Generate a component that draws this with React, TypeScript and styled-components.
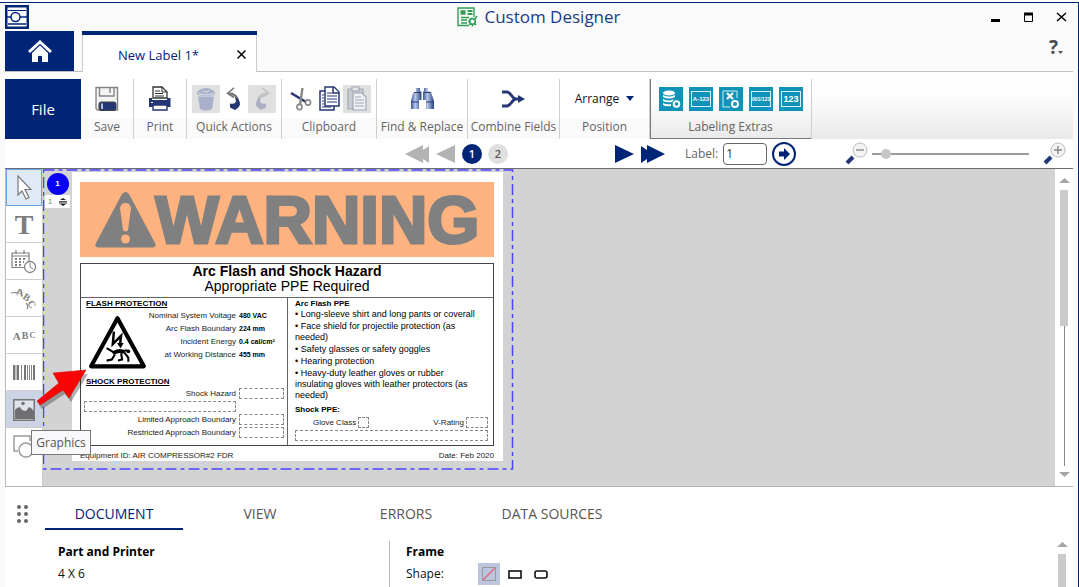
import React from 'react';
import styled, { createGlobalStyle } from 'styled-components';

const NAVY = '#002577';
const INK = '#243673';
const TEAL = '#0f93b8';

const Global = createGlobalStyle`
  * { box-sizing: border-box; }
  body { margin: 0; background: #fff; overflow: hidden; font-family: "Open Sans", "Noto Sans", sans-serif; font-size: 12px; color: #222; }
  button, input { font-family: inherit; }
  button { border: 0; padding: 0; background: none; color: inherit; }
  p, h1, h2, h3, ul { margin: 0; padding: 0; }
  svg { display: block; flex: none; }
`;

/* ---------- window ---------- */
const Shell = styled.div`
  display: flex; flex-direction: column; min-height: 100vh;
  margin-top: 2px; padding: 0 5px; background: #fafafa;
  border-top: 1px solid ${NAVY}; border-right: 1px solid ${NAVY};
`;
const TitleBar = styled.header`
  display: grid; grid-template-columns: 1fr auto 1fr; align-items: center; height: 28px;
`;
const Title = styled.h1`
  display: flex; align-items: center; gap: 6px; height: 28px;
  color: #1b3a86; font-size: 17px; line-height: 28px; font-weight: 400;
`;
const WindowButtons = styled.div`
  display: flex; justify-content: flex-end; gap: 20px; padding-right: 5px;
`;
const IconButton = styled.button`
  display: flex; align-items: center; justify-content: center;
`;
const TabRow = styled.nav`
  display: flex; height: 41px; border-bottom: 1px solid #bfbfbf;
`;
const HomeButton = styled.button`
  display: flex; align-items: center; justify-content: center;
  width: 69px; height: 40px; margin-right: 8px; background: ${NAVY};
`;
const DocTab = styled.div`
  display: flex; align-items: center; justify-content: flex-end; gap: 37px;
  width: 175px; height: 41px; padding: 2px 10px 0 0; background: #fff;
  border: solid ${NAVY}; border-width: 4px 0 0; box-shadow: inset 1px 0 #ccc, inset -1px 0 #ccc;
  color: ${NAVY}; font-size: 13px;
`;
const HelpButton = styled.button`
  display: flex; align-items: center; margin: 0 10px 8px auto;
  color: #4a4a52; font-size: 19px; line-height: 24px; font-weight: 700;
`;

/* ---------- ribbon ---------- */
const Ribbon = styled.div`
  display: flex; height: 67px; padding-top: 7px; background: linear-gradient(#fff, #fdfdfd 35%, #e9e9e9);
`;
const FileButton = styled.button`
  width: 76px; background: ${NAVY}; color: #fff; font-size: 15px;
  box-shadow: 0 -7px #fff;
`;
const Group = styled.section<{ $w: number; $dark?: boolean }>`
  display: flex; flex-direction: column; align-items: center; width: ${p => p.$w}px;
  border-right: 1px solid #cfcfcf; box-shadow: 0 -7px #fff;
  background: ${p => p.$dark ? 'linear-gradient(#fff, #fdfdfd 35%, #e9e9e9)' : 'linear-gradient(#fff 65%, #fafafa 65%)'};
  ${p => p.$dark && 'box-shadow: inset 1px 0 #77777c, inset 0 -1px #77777c;'}
`;
const GroupBody = styled.div<{ $gap?: number }>`
  display: flex; align-items: center; justify-content: center; gap: ${p => p.$gap ?? 0}px; height: 39px;
`;
const GroupLabel = styled.h2`
  color: #646464; font-size: 12px; line-height: 18px; font-weight: 400; white-space: nowrap;
`;
const ToolButton = styled.button<{ $off?: boolean }>`
  display: flex; align-items: center; justify-content: center; width: 28px; height: 28px;
  background: ${p => p.$off ? '#e0e0e0' : 'transparent'};
`;
const ArrangeButton = styled.button`
  display: flex; align-items: center; gap: 7px; color: #111; font-size: 12px;
`;
const ExtraButton = styled.button`
  display: flex; align-items: center; justify-content: center; width: 24px; height: 24px; background: ${TEAL};
`;

/* ---------- navigation ---------- */
const NavBar = styled.div`
  display: flex; align-items: center; height: 30px; padding: 0 7px 0 400px;
  background: #fff; border-bottom: 1px solid #6c6c70;
`;
const Pager = styled.div`
  display: flex; align-items: center; gap: 6px;
`;
const PageDot = styled.button<{ $on?: boolean }>`
  width: 20px; height: 20px; border-radius: 50%; font-size: 11px; font-weight: 600; line-height: 20px;
  background: ${p => p.$on ? NAVY : '#dfdfdf'}; color: ${p => p.$on ? '#fff' : '#555'};
`;
const Forward = styled(Pager)` margin-left: 106px; `;
const LabelJump = styled.label`
  display: flex; align-items: center; gap: 5px; margin-left: 20px; color: #666; font-size: 12px;
`;
const LabelInput = styled.input`
  width: 44px; height: 22px; padding: 0 2px; border: 1px solid #666; border-radius: 4px;
  font-size: 12px; color: #333; background: #fff;
`;
const GoButton = styled(IconButton)` margin-left: 5px; `;
const Zoomer = styled.div`
  display: flex; align-items: center; gap: 4px; margin-left: auto;
`;
const ZoomRange = styled.input`
  appearance: none; width: 157px; height: 12px; margin: 0 10px 0 0; background: transparent;
  &::-webkit-slider-runnable-track { height: 2px; background: #9a9a9a; }
  &::-webkit-slider-thumb { appearance: none; width: 10px; height: 10px; margin-top: -4px; border-radius: 50%; background: #c6c6c6; }
`;

/* ---------- work area ---------- */
const WorkArea = styled.main`
  position: relative; display: flex; border-bottom: 1px solid #b5b5b5;
`;
const ToolRail = styled.div`
  display: flex; flex-direction: column; width: 38px; padding: 0 0 21px;
  background: #fff; border-left: 1px solid #bbb; border-right: 1px solid #ccc;
`;
const RailTool = styled.button<{ $state?: 'active' | 'hover' }>`
  display: flex; align-items: center; justify-content: center; gap: 1px; height: 37px;
  border: 1px solid ${p => p.$state === 'active' ? '#66a7e8' : 'transparent'};
  border-bottom-color: ${p => p.$state === 'active' ? '#66a7e8' : '#ccc'};
  background: ${p => p.$state === 'active' ? '#dfeaf6' : p.$state === 'hover' ? '#ccd3e4' : '#fff'};
  color: #7c7c7c;
  &:last-child { border-bottom-color: transparent; }
`;
const Glyph = styled.span<{ $size: number }>`
  font-family: "Liberation Serif", serif; font-weight: 700; font-size: ${p => p.$size}px; line-height: 30px;
`;
const Canvas = styled.div`
  flex: 1; background: #d3d3d3;
`;
const Sheet = styled.div`
  position: relative; display: flex; width: 471px; padding: 3px 0 10px;
`;
const Boundary = styled.svg`
  position: absolute; left: 0; top: 0; width: 100%; height: 100%;
`;
const Gutter = styled.div`
  display: flex; flex-direction: column; align-items: center; width: 29px; padding-top: 1px;
`;
const SheetNumber = styled.div`
  width: 22px; height: 22px; border-radius: 50%; background: #0a00f5; color: #fff;
  font: 700 8px/22px "Liberation Sans", sans-serif; text-align: center;
`;
const CopyCount = styled.div`
  display: flex; align-items: center; justify-content: space-between; width: 25px; height: 13px; padding: 0 3px;
  background: #fff; color: #3a8a5a; font: 7px/13px "Liberation Sans", sans-serif;
`;
const LabelPaper = styled.article`
  width: 431px; height: 289px; padding: 10px 9px 0 8px; background: #fff; color: #222;
  font-family: "Liberation Sans", Arial, sans-serif; font-size: 8px; line-height: 13px;
`;
const Banner = styled.div`
  display: flex; align-items: center; justify-content: center;
  height: 75px; background: #fdb27f; color: #808080;
`;
const BannerWord = styled.span`
  font-size: 67px; line-height: 75px; font-weight: 700; -webkit-text-stroke: 3px #808080;
`;
const Hazard = styled.section`
  margin-top: 6px; border: 1px solid #444;
`;
const HazardHead = styled.header`
  height: 34px; border-bottom: 1px solid #666; text-align: center; color: #000; font-size: 14px; line-height: 15px;
`;
const HazardBody = styled.div`
  display: grid; grid-template-columns: 207px 1fr; height: 147px;
`;
const Side = styled.div<{ $left?: boolean }>`
  padding: ${p => p.$left ? '0 3px 0 3px' : '0 5px 0 7px'};
  ${p => p.$left && 'border-right: 1px solid #666;'}
`;
const Caption = styled.h3<{ $rule?: boolean }>`
  padding-left: ${p => p.$rule ? 2 : 0}px; color: #000; font-size: 8px; line-height: ${p => p.$rule ? 11 : 12}px; font-weight: 700;
  text-decoration: ${p => p.$rule ? 'underline' : 'none'};
`;
const FlashRow = styled.div`
  display: flex; justify-content: space-between; align-items: flex-start; height: 67px; padding-left: 4px;
`;
const Facts = styled.table`
  border-collapse: collapse;
  th { padding: 0 3px 0 0; font-weight: 400; text-align: right; white-space: nowrap; }
  td { width: 45px; padding: 0; font-size: 7px; font-weight: 700; color: #000; white-space: nowrap; }
  tr { height: 13px; }
`;
const FieldLine = styled.div<{ $side?: 'start' | 'spread' }>`
  display: flex; align-items: center; height: 13px; gap: 3px;
  justify-content: ${p => p.$side === 'spread' ? 'space-between' : p.$side === 'start' ? 'flex-start' : 'flex-end'};
`;
const Pair = styled.span<{ $indent?: number }>`
  display: flex; align-items: center; gap: 2px; padding-left: ${p => p.$indent ?? 0}px;
`;
const Field = styled.span<{ $w?: number }>`
  width: ${p => p.$w ? `${p.$w}px` : '100%'}; height: 11px; border: 1px dashed #888;
`;
const Bullets = styled.ul`
  list-style: none; width: 184px; margin-bottom: 2px; color: #000; font-size: 9px; line-height: 11px;
  li { padding-bottom: 1px; white-space: normal; }
  li:first-child { width: 190px; margin-top: -1px; }
`;
const PaperFoot = styled.footer`
  display: flex; justify-content: space-between; height: 14px; padding-top: 3px;
`;
const ToolTip = styled.div`
  position: absolute; left: 26px; top: 261px; width: 60px; height: 25px; text-align: center;
  background: #f8f8fa; border: 1px solid #777; color: #555; font-size: 12px; line-height: 23px;
`;
const Pointer = styled.svg`
  position: absolute; left: 25px; top: 195px; pointer-events: none;
`;
const ScrollTrack = styled.div`
  display: flex; flex-direction: column; align-items: center; width: 18px; padding: 9px 0; background: #fff;
`;
const ScrollThumb = styled.div<{ $h?: number }>`
  width: 8px; margin-top: 7px; background: #cacaca;
  ${p => p.$h ? `height: ${p.$h}px;` : 'flex: 1;'}
`;
const ScrollLine = styled.div` flex: 1; width: 1px; margin-bottom: 6px; background: #888; `;

/* ---------- bottom panel ---------- */
const Panel = styled.section`
  flex: 1; display: flex; background: #fff; min-height: 100px;
`;
const PanelMain = styled.div` flex: 1; `;
const PanelTabs = styled.div`
  display: flex; align-items: center; gap: 8px; height: 54px; padding-left: 11px;
`;
const PanelTab = styled.button<{ $on?: boolean }>`
  width: 138px; height: 31px; font-size: 14px;
  border-bottom: 2px solid ${p => p.$on ? NAVY : 'transparent'}; color: ${p => p.$on ? NAVY : '#555'};
`;
const Columns = styled.div` display: flex; height: 46px; `;
const Column = styled.div<{ $w?: number }>`
  width: ${p => p.$w ? `${p.$w}px` : 'auto'}; color: #111; font-size: 12px; line-height: 22px;
  ${p => p.$w ? 'padding-left: 53px; border-right: 1px solid #bbb;' : 'padding-left: 16px;'}
`;
const ColumnTitle = styled.h2` font-size: 12px; line-height: 22px; font-weight: 700; color: #000; `;
const ShapeRow = styled.div` display: flex; align-items: center; height: 22px; gap: 4px; `;
const ShapeName = styled.span` width: 68px; `;
const ShapeButton = styled.button<{ $on?: boolean }>`
  display: flex; align-items: center; justify-content: center; width: 22px; height: 22px;
  background: ${p => p.$on ? '#bcc4de' : 'transparent'};
`;
const PanelScroll = styled.div`
  display: flex; flex-direction: column; align-items: center; width: 22px; padding-top: 55px;
`;

/* ---------- drawings ---------- */
const Tri = ({ down }: { down?: boolean }) => (
  <svg width="11" height="5"><path d={down ? 'M0 0h11L5.5 5z' : 'M0 5h11L5.5 0z'} fill="#a5a5a5" /></svg>
);
const Rewind = ({ twice, flip, fill }: { twice?: boolean; flip?: boolean; fill: string }) => (
  <svg width={twice ? 25 : 20} height="20">
    <g fill={fill} transform={flip ? `translate(${twice ? 25 : 20} 0) scale(-1 1)` : undefined}>
      {twice ? <path d="M0 10L18 1v5l6-4v17l-6-4v4z" /> : <path d="M0 10L19 1v18z" />}
    </g>
  </svg>
);
const Magnifier = ({ plus }: { plus?: boolean }) => (
  <svg width="23" height="23" fill="none">
    <path d="M8 15l-6 6" stroke={INK} strokeWidth="4" />
    <circle cx="15" cy="8" r="7" fill="#f3f3f3" stroke="#bbb" />
    <path d={plus ? 'M11 8h8M15 4v8' : 'M11 8h8'} stroke="#888" strokeWidth="1.4" />
  </svg>
);
const Logo = () => (
  <svg width="24" height="24" fill="none" stroke={NAVY}>
    <rect x="1.25" y="1.25" width="21.500" height="21.500" strokeWidth="2.500" fill="#fff" />
    <path d="M3 5.500h18" strokeWidth="1" /><path d="M3 19h18M2 12h4M15 12h7" strokeWidth="1.5" /><circle cx="10.500" cy="12" r="4.500" strokeWidth="1.5" />
  </svg>
);
const TitleIcon = () => (
  <svg width="21" height="20" fill="none" stroke="#2e9e55">
    <path d="M12 18.500H1V1h16v9" strokeWidth="1.4" />
    <path d="M3.500 5.500h5" strokeWidth="4.500" /><path d="M10.500 4h5M10.500 7h5" strokeWidth="2" />
    <path d="M4 10.500h8M4 13h6M4 16h6" strokeWidth="1.600" />
    <circle cx="15.500" cy="14.500" r="2.800" strokeWidth="1.600" />
    <path d="M15 10.500v1.500M15.500 17v2.500M11 14.500h2M17.500 12.500l2.500-3.500M12.500 18l1.500-1.500M17.500 16.500l1.500 1.500M12.500 11.500l1 1" strokeWidth="1.500" />
  </svg>
);
const SaveIcon = () => (
  <svg width="24" height="26" fill="none" stroke="#858585">
    <path d="M1 1.500h21.500V24H2.500L1 22.500z" fill="#f4f4f4" strokeWidth="1.4" />
    <path d="M4.500 2v8h14.500V2M15 2v5" strokeWidth="1.4" />
    <rect x="4" y="16" width="17" height="8.500" rx="2" fill={INK} stroke="#444" /><path d="M7 17.500v5.500" stroke="#eee" strokeWidth="1.500" />
  </svg>
);
const PrintIcon = () => (
  <svg width="22" height="25">
    <path d="M4 10V1h9l5 5v6H4z" fill="#fff" stroke="#333" strokeWidth="1.3" /><path d="M6 5h5M6 7.500h8M6 10h9M13 1v5h5" fill="none" stroke="#333" />
    <path d="M0 12h3v2h15v-2h3.500v9h-4v-2H4v2H0z" fill={INK} /><path d="M4 19h14v5H4z" fill="#fff" stroke={INK} strokeWidth="1.4" />
    <path d="M2 16.500h2" stroke="#fff" />
  </svg>
);
const TrashIcon = () => (
  <svg width="20" height="24" fill="#a9b0c9">
    <path d="M2 9.500h16l-2 12.500q-6 3-12 0z" /><path d="M1 5q9-8 18 0v2.500q-9 3-18 0z" /><path d="M7 3.500l3 2 3-2M2 6.500q8 3 16 0" fill="none" stroke="#dfe1e8" />
  </svg>
);
const UndoIcon = ({ off }: { off?: boolean }) => (
  <svg width="16" height="24">
    <g transform={off ? 'translate(16 0) scale(-1 1)' : undefined} opacity={off ? 0.28 : 1}>
      <path d="M2 6.500C8 6 12.500 10 12 16" fill="none" stroke="#777" strokeWidth="2.400" />
      <path d="M8 .8L1.500 6.500 8 10.500" fill="none" stroke="#777" strokeWidth="1.500" />
      <path d="M9 10q5 3 5 7 0 3-5 6l-5-2.500v-4q5 1 6-2z" fill={INK} />
    </g>
  </svg>
);
const CutIcon = () => (
  <svg width="22" height="24" fill="none">
    <path d="M1 6l15 9" stroke={INK} strokeWidth="2.600" /><path d="M12.500 1L10 18" stroke="#888" strokeWidth="2.400" />
    <circle cx="9.500" cy="20" r="2.600" stroke="#888" strokeWidth="1.600" /><circle cx="18" cy="15.500" r="2.600" stroke="#888" strokeWidth="1.600" />
  </svg>
);
const CopyIcon = () => (
  <svg width="21" height="25" fill="#fff" stroke={INK} strokeWidth="1.500">
    <path d="M1 5h14v19H1z" /><path d="M6 1h9l5 5v14H6z" /><path d="M14 1v6h6" />
    <path d="M8 7h5M8 10h10M8 13h10M8 16h10M3 9h2M3 12h2M3 15h2M3 18h2M3 21h9" strokeWidth="1" />
  </svg>
);
const PasteIcon = () => (
  <svg width="21" height="25" fill="none" stroke="#a4a8b4" strokeWidth="1.2">
    <path d="M1 3h15v20H1z" fill="#c9cbd2" /><path d="M5 1h7v4H5z" fill="#e6e6e6" />
    <path d="M6 7h9l4 4v13H6z" fill="#eef0f5" /><path d="M8 11h6M8 14h9M8 17h9M8 20h9" strokeWidth="1" />
  </svg>
);
const Binoculars = () => (
  <svg width="25" height="22">
    <defs><linearGradient id="bino"><stop stopColor="#3d5490" /><stop offset=".4" stopColor="#b6c9ee" /><stop offset="1" stopColor="#2d4380" /></linearGradient></defs>
    <g fill="url(#bino)"><path d="M6 0h4v3l1.500 1v8H9v9H1v-8L3 5l3-1z" /><path d="M14 0h4v3l3 1 3 9v8h-8v-9h-3V4l1-1z" /></g>
    <path d="M1 14h8M16 14h8M4 4.500h7M14 4.500h7" stroke="#2c3f70" />
  </svg>
);
const CombineIcon = () => (
  <svg width="25" height="18" fill="none" stroke={INK} strokeWidth="3">
    <path d="M1 2h5c4 0 5 7 9 7h4M1 16h5c4 0 5-7 9-7" /><path d="M17 5l7 4-7 4z" fill={INK} stroke="none" />
  </svg>
);
const ExtraFrame = ({ text }: { text: string }) => {
  const [size, baseline] = text.length > 5 ? [5, 10] : text.length > 3 ? [6, 10] : [9, 11];
  return (
    <svg width="20" height="16" fill="none" stroke="#d6f0f6">
      <rect x=".5" y=".5" width="19" height="15" />
      <text x="10" y={baseline} fontSize={size} fontWeight="700" textAnchor="middle" fill="#fff" stroke="none" fontFamily="Liberation Sans, sans-serif">{text}</text>
    </svg>
  );
};
const ExtraData = () => (
  <svg width="20" height="20" fill="#fff">
    <ellipse cx="8" cy="4" rx="6" ry="2.500" /><path d="M2 6q6 3 12 0v2q-6 3-12 0zM2 10q6 3 11 0l-2 3q-5 1-9-1zM2 14q4 2 8 1v2q-5 1-8-1z" />
    <circle cx="15.500" cy="15" r="2.800" fill={TEAL} stroke="#fff" strokeWidth="2" />
  </svg>
);
const ExtraSheet = () => (
  <svg width="20" height="20" fill="none" stroke="#d6f0f6">
    <path d="M9 18H2V2h14v7" /><path d="M6 4l6 6M12 4l-6 6" stroke="#fff" strokeWidth="2.200" /><circle cx="14" cy="15" r="3" stroke="#fff" strokeWidth="2" />
  </svg>
);
const CalendarIcon = () => (
  <svg width="26" height="24" fill="none" stroke="#808080">
    <path d="M13 17.500H1V3h17v8M1 6h17M5 0v4M13 0v4" strokeWidth="1.2" />
    <path d="M4 9h11M4 12h9M4 15h8" strokeWidth="2" strokeDasharray="2 2" /><circle cx="19" cy="17" r="5.500" strokeWidth="1.3" fill="#fff" /><path d="M19 13v4l3 2" />
  </svg>
);
const CurvedText = () => (
  <svg width="28" height="26" fill="#808080" fontFamily="Liberation Serif, serif" fontWeight="700" fontSize="10">
    <path d="M1 7q4-1 6 0l3-4" fill="none" stroke="#808080" strokeWidth="1.2" />
    <text transform="translate(6 9) rotate(14)">A</text>
    <text transform="translate(12 12) rotate(36)">B</text>
    <text transform="translate(17 17) rotate(58)">C</text>
    <path d="M16 17q3 3 1 6" fill="none" stroke="#808080" strokeWidth="1.2" />
  </svg>
);
const Barcode = () => (
  <svg width="22" height="15"><path d="M1 0v15M5 0v15M12 0v15M21 0v15" stroke="#777" strokeWidth="2" /><path d="M3 0v15M8.500 0v15M14.500 0v15M16.500 0v15M18.500 0v15" stroke="#888" /></svg>
);
const PictureIcon = () => (
  <svg width="22" height="22"><rect x=".75" y=".75" width="20.500" height="20.500" fill="#dfe3ec" stroke="#777" strokeWidth="1.5" />
    <path d="M2 20v-9l2-2 3-1 2 3 4 1 3-4 2 1 3 3v8z" fill="#6f6f72" /><circle cx="10" cy="4.500" r="1.800" fill="#777" /></svg>
);
const ShapesIcon = () => (
  <svg width="22" height="24" fill="none" stroke="#999" strokeWidth="1.4"><path d="M5 16H1V1h16v5" /><circle cx="13" cy="15" r="7" /></svg>
);
const AlertTriangle = () => (
  <svg width="61" height="56" fill="#808080"><path d="M27 2q3.500-4 7 0l26 49q2 4-2 4.500H3q-4-.5-2-4.500z" />
    <path d="M25 16q1-5 5.500-5t5.500 5l-3 22q-2.500 3-5 0z" fill="#fdb27f" /><circle cx="30.500" cy="47" r="4.500" fill="#fdb27f" /></svg>
);
const SignWrap = styled.span` padding-top: 5px; `;
const ShockSign = () => (
  <SignWrap>
    <svg width="60" height="56" viewBox="0 0 58 54" fill="none" stroke="#000">
      <path d="M28.500 4L54 50.500H3z" strokeWidth="4" strokeLinejoin="round" fill="#fff" />
      <path d="M25 17l-1 12 8-8-1 8" strokeWidth="2.400" /><path d="M28 28l3.500 5 3-5z" fill="#000" stroke="none" />
      <path d="M18 33l7 4 7-1 6-1" strokeWidth="2" /><path d="M24 38q6-4 11-1" strokeWidth="4" />
      <path d="M26 39l-3 5-5 1M32 38l1 6-4 1M35 37l4 5v4" strokeWidth="2" /><circle cx="39" cy="36" r="1.800" fill="#000" stroke="none" />
    </svg>
  </SignWrap>
);

const flashFacts = [
  ['Nominal System Voltage', '480 VAC'],
  ['Arc Flash Boundary', '224 mm'],
  ['Incident Energy', '0.4 cal/cm²'],
  ['at Working Distance', '455 mm'],
];
const equipment = [
  'Long-sleeve shirt and long pants or coverall',
  'Face shield for projectile protection (as needed)',
  'Safety glasses or safety goggles',
  'Hearing protection',
  'Heavy-duty leather gloves or rubber insulating gloves with leather protectors (as needed)',
];

const HazardLabel = () => (
  <LabelPaper>
    <Banner><AlertTriangle /><BannerWord>WARNING</BannerWord></Banner>
    <Hazard>
      <HazardHead>
        <p><strong>Arc Flash and Shock Hazard</strong></p>
        <p>Appropriate PPE Required</p>
      </HazardHead>
      <HazardBody>
        <Side $left>
          <Caption $rule>FLASH PROTECTION</Caption>
          <FlashRow>
            <ShockSign />
            <Facts><tbody>
              {flashFacts.map(([name, value]) => <tr key={name}><th scope="row">{name}</th><td>{value}</td></tr>)}
            </tbody></Facts>
          </FlashRow>
          <Caption $rule>SHOCK PROTECTION</Caption>
          <FieldLine>Shock Hazard<Field $w={45} /></FieldLine>
          <FieldLine $side="start"><Field $w={152} /></FieldLine>
          <FieldLine>Limited Approach Boundary<Field $w={45} /></FieldLine>
          <FieldLine>Restricted Approach Boundary<Field $w={45} /></FieldLine>
        </Side>
        <Side>
          <Caption>Arc Flash PPE</Caption>
          <Bullets>{equipment.map(item => <li key={item}>• {item}</li>)}</Bullets>
          <Caption>Shock PPE:</Caption>
          <FieldLine $side="spread">
            <Pair $indent={18}>Glove Class<Field $w={11} /></Pair>
            <Pair>V-Rating<Field $w={22} /></Pair>
          </FieldLine>
          <FieldLine><Field /></FieldLine>
        </Side>
      </HazardBody>
    </Hazard>
    <PaperFoot><span>Equipment ID: AIR COMPRESSOR#2 FDR</span><span>Date: Feb 2020</span></PaperFoot>
  </LabelPaper>
);

export default function App() {
  return (
    <>
      <Global />
      <Shell>
        <TitleBar>
          <Logo />
          <Title><TitleIcon />Custom Designer</Title>
          <WindowButtons>
            <IconButton aria-label="Minimize"><svg width="13" height="12"><path d="M2 9.500h9" stroke="#000" strokeWidth="3" /></svg></IconButton>
            <IconButton aria-label="Maximize"><svg width="13" height="12"><path d="M2.500 3v7.500h8V3" fill="none" stroke="#000" /><path d="M2 3h9" stroke="#000" strokeWidth="3" /></svg></IconButton>
            <IconButton aria-label="Close"><svg width="13" height="12"><path d="M2 2l9 8M11 2l-9 8" stroke="#000" strokeWidth="1.500" /></svg></IconButton>
          </WindowButtons>
        </TitleBar>

        <TabRow>
          <HomeButton aria-label="Home">
            <svg width="24" height="23" fill="#fff"><path d="M1 12L12 2l11 10" fill="none" stroke="#fff" strokeWidth="3" /><path d="M12 5.500l8 7.500v9h-6v-6h-4v6H4v-9z" /></svg>
          </HomeButton>
          <DocTab>New Label 1*
            <IconButton aria-label="Close tab"><svg width="11" height="11"><path d="M1.500 1.500l8 8M9.500 1.500l-8 8" stroke="#000" strokeWidth="1.500" /></svg></IconButton>
          </DocTab>
          <HelpButton aria-label="Help">?<svg width="5" height="14"><path d="M0 11h5l-2.500 3z" fill="#555" /></svg></HelpButton>
        </TabRow>

        <Ribbon>
          <FileButton>File</FileButton>
          <Group $w={53}><GroupBody><IconButton aria-label="Save"><SaveIcon /></IconButton></GroupBody><GroupLabel>Save</GroupLabel></Group>
          <Group $w={53}><GroupBody><IconButton aria-label="Print"><PrintIcon /></IconButton></GroupBody><GroupLabel>Print</GroupLabel></Group>
          <Group $w={95}>
            <GroupBody>
              <ToolButton $off aria-label="Delete"><TrashIcon /></ToolButton>
              <ToolButton aria-label="Undo"><UndoIcon /></ToolButton>
              <ToolButton $off aria-label="Redo"><UndoIcon off /></ToolButton>
            </GroupBody>
            <GroupLabel>Quick Actions</GroupLabel>
          </Group>
          <Group $w={95}>
            <GroupBody>
              <ToolButton aria-label="Cut"><CutIcon /></ToolButton>
              <ToolButton aria-label="Copy"><CopyIcon /></ToolButton>
              <ToolButton $off aria-label="Paste"><PasteIcon /></ToolButton>
            </GroupBody>
            <GroupLabel>Clipboard</GroupLabel>
          </Group>
          <Group $w={91}><GroupBody><IconButton aria-label="Find and replace"><Binoculars /></IconButton></GroupBody><GroupLabel>Find &amp; Replace</GroupLabel></Group>
          <Group $w={92}><GroupBody><IconButton aria-label="Combine fields"><CombineIcon /></IconButton></GroupBody><GroupLabel>Combine Fields</GroupLabel></Group>
          <Group $w={90}>
            <GroupBody><ArrangeButton>Arrange<svg width="8" height="5"><path d="M0 0h8L4 5z" fill={NAVY} /></svg></ArrangeButton></GroupBody>
            <GroupLabel>Position</GroupLabel>
          </Group>
          <Group $w={162} $dark>
            <GroupBody $gap={6}>
              <ExtraButton aria-label="Data source"><ExtraData /></ExtraButton>
              <ExtraButton aria-label="Alphanumeric series"><ExtraFrame text="A-123" /></ExtraButton>
              <ExtraButton aria-label="Spreadsheet"><ExtraSheet /></ExtraButton>
              <ExtraButton aria-label="Paired series"><ExtraFrame text="001/123" /></ExtraButton>
              <ExtraButton aria-label="Numeric series"><ExtraFrame text="123" /></ExtraButton>
            </GroupBody>
            <GroupLabel>Labeling Extras</GroupLabel>
          </Group>
        </Ribbon>

        <NavBar>
          <Pager>
            <IconButton aria-label="First"><Rewind twice fill="#b3b3b3" /></IconButton>
            <IconButton aria-label="Previous"><Rewind fill="#b3b3b3" /></IconButton>
            <PageDot $on>1</PageDot>
            <PageDot>2</PageDot>
          </Pager>
          <Forward>
            <IconButton aria-label="Next"><Rewind flip fill={NAVY} /></IconButton>
            <IconButton aria-label="Last"><Rewind twice flip fill={NAVY} /></IconButton>
          </Forward>
          <LabelJump>Label:<LabelInput defaultValue="1" /></LabelJump>
          <GoButton aria-label="Go to label">
            <svg width="24" height="24"><circle cx="12" cy="12" r="11" fill="#fff" stroke={NAVY} strokeWidth="2" /><path d="M7 9.500h5V6l6 6-6 6v-3.500H7z" fill={NAVY} /></svg>
          </GoButton>
          <Zoomer>
            <IconButton aria-label="Zoom out"><Magnifier /></IconButton>
            <ZoomRange type="range" aria-label="Zoom" min={0} max={100} defaultValue={6} />
            <IconButton aria-label="Zoom in"><Magnifier plus /></IconButton>
          </Zoomer>
        </NavBar>

        <WorkArea>
          <ToolRail>
            <RailTool $state="active" aria-label="Select"><svg width="16" height="26"><path d="M2 1v19l4-4 4 8 3-1.500-4-8h6z" fill="#fff" stroke="#777" strokeWidth="1.2" /></svg></RailTool>
            <RailTool aria-label="Text"><Glyph $size={28}>T</Glyph></RailTool>
            <RailTool aria-label="Date and time"><CalendarIcon /></RailTool>
            <RailTool aria-label="Curved text"><CurvedText /></RailTool>
            <RailTool aria-label="Scaled text"><Glyph $size={11}>A</Glyph><Glyph $size={10}>B</Glyph><Glyph $size={8}>C</Glyph></RailTool>
            <RailTool aria-label="Barcode"><Barcode /></RailTool>
            <RailTool $state="hover" aria-label="Graphics"><PictureIcon /></RailTool>
            <RailTool aria-label="Shapes"><ShapesIcon /></RailTool>
          </ToolRail>
          <Canvas>
            <Sheet>
              <Gutter>
                <SheetNumber>1</SheetNumber>
                <CopyCount>1<svg width="8" height="10" fill="#222"><path d="M1 3l3-2 3 2zM1 7l3 2 3-2z" /><path d="M0 4h8v.8H0zM0 5.600h8v.8H0z" /></svg></CopyCount>
              </Gutter>
              <HazardLabel />
              <Boundary><rect x=".5" y="1" width="469" height="299" fill="none" stroke="#4a43ff" strokeWidth="1.500" strokeDasharray="11 4 4 4" /></Boundary>
            </Sheet>
          </Canvas>
          <ScrollTrack>
            <Tri /><ScrollThumb $h={136} /><ScrollLine /><Tri down />
          </ScrollTrack>
          <ToolTip role="tooltip">Graphics</ToolTip>
          <Pointer width="66" height="56">
            <path transform="translate(2 4)" d="M7 37L29 19 23 9 56 6 39 34 33 26 10 41z" fill="#222" opacity=".35" />
            <path d="M7 37L29 19 23 9 56 6 39 34 33 26 10 41z" fill="#f80606" stroke="#d00000" strokeWidth=".5" />
          </Pointer>
        </WorkArea>

        <Panel>
          <PanelMain>
            <PanelTabs>
              <svg width="21" height="18" fill="#666">
                {[3, 10].map(x => [2, 9, 16].map(y => <circle key={`${x}-${y}`} cx={x} cy={y} r="2" />))}
              </svg>
              <PanelTab $on>DOCUMENT</PanelTab>
              <PanelTab>VIEW</PanelTab>
              <PanelTab>ERRORS</PanelTab>
              <PanelTab>DATA SOURCES</PanelTab>
            </PanelTabs>
            <Columns>
              <Column $w={385}><ColumnTitle>Part and Printer</ColumnTitle><p>4 X 6</p></Column>
              <Column>
                <ColumnTitle>Frame</ColumnTitle>
                <ShapeRow>
                  <ShapeName>Shape:</ShapeName>
                  <ShapeButton $on aria-label="No frame"><svg width="14" height="14" fill="none"><rect x=".5" y=".5" width="13" height="13" stroke="#999" /><path d="M1 13L13 1" stroke="#e0697c" strokeWidth="1.400" /></svg></ShapeButton>
                  <ShapeButton aria-label="Rectangle"><svg width="14" height="9"><rect x="1" y="1" width="12" height="7" fill="#fff" stroke="#111" strokeWidth="1.600" /></svg></ShapeButton>
                  <ShapeButton aria-label="Rounded rectangle"><svg width="14" height="9"><rect x="1" y="1" width="12" height="7" rx="2" fill="#fff" stroke="#111" strokeWidth="1.600" /></svg></ShapeButton>
                </ShapeRow>
              </Column>
            </Columns>
          </PanelMain>
          <PanelScroll><Tri /><ScrollThumb /></PanelScroll>
        </Panel>
      </Shell>
    </>
  );
}
